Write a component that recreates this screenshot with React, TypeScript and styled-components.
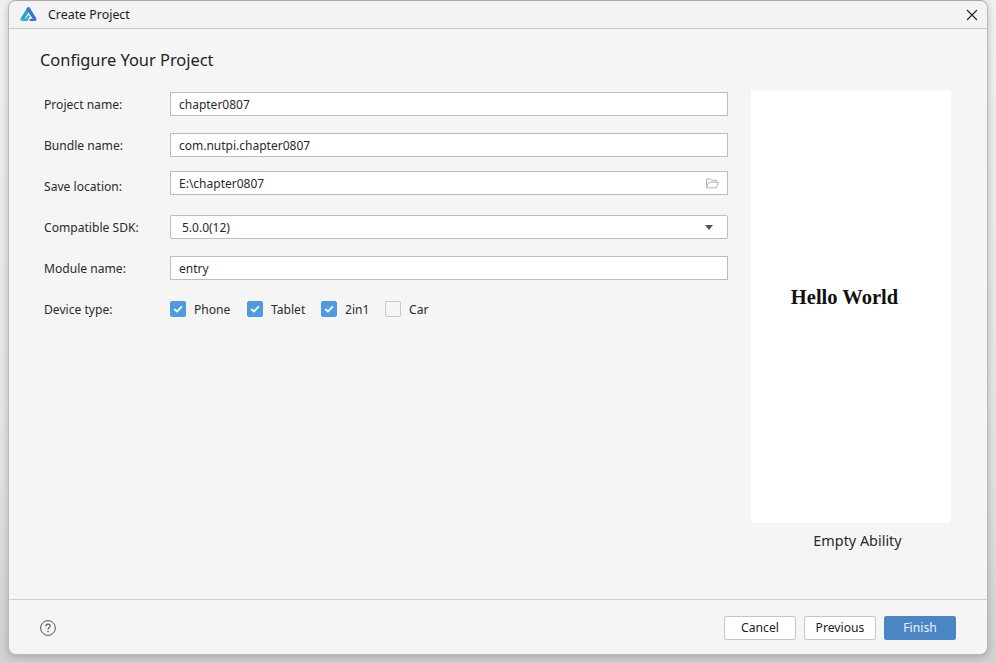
import { createGlobalStyle } from 'styled-components';
import styled from 'styled-components';

const GlobalStyle = createGlobalStyle`
  html, body {
    margin: 0;
    padding: 0;
    height: 100%;
    background: #e9e9e9;
    overflow: hidden;
  }
  #root {
    height: 100%;
  }
  * {
    box-sizing: border-box;
  }
`;

const Desktop = styled.div`
  width: 996px;
  height: 663px;
  padding: 0 8px 8px;
  background: linear-gradient(to bottom, #f2f2f2, #e4e4e4 70%, #d2d2d2);
  font-family: 'Noto Sans', 'Open Sans', sans-serif;
  color: #222;
`;
const Dialog = styled.div`
  width: 980px;
  height: 655px;
  display: flex;
  flex-direction: column;
  background: #f5f5f5;
  border: 1px solid #b9b9b9;
  border-top-color: #aaa;
  border-radius: 8px;
  box-shadow: 0 2px 8px rgba(0, 0, 0, 0.22);
  overflow: hidden;
`;
const TitleBar = styled.div`
  height: 28px;
  flex: none;
  display: flex;
  align-items: center;
  padding: 0 9px 0 11px;
  background: #f3f3f3;
  border-bottom: 1px solid #c9c9c9;
`;
const TitleText = styled.span`
  margin-left: 11px;
  font-size: 12.4px;
  color: #1c1c1c;
`;
const CloseButton = styled.button`
  width: 12px;
  height: 12px;
  margin-left: auto;
  padding: 0;
  border: 0;
  background: none;
  display: flex;
`;
const Body = styled.div`
  flex: 1;
  min-height: 0;
  display: flex;
  padding: 18px 36px 0 31px;
`;
const FormColumn = styled.div`
  width: 688px;
  flex: none;
`;
const Heading = styled.h1`
  margin: 0 0 20px;
  height: 25px;
  font-size: 16.4px;
  line-height: 25px;
  font-weight: 400;
  color: #1e1e1e;
`;
const Row = styled.div<{ $top: number }>`
  display: flex;
  align-items: center;
  height: 24px;
  margin-top: ${(p) => p.$top}px;
  padding-left: 4px;
`;
const Label = styled.label<{ $drop?: number }>`
  width: 126px;
  flex: none;
  padding-top: ${(p) => p.$drop ?? 0}px;
  font-size: 12.1px;
  color: #2a2a2a;
`;
const FieldBox = styled.div`
  flex: 1;
  height: 24px;
  display: flex;
  align-items: center;
  justify-content: space-between;
  padding: 0 8px;
  background: #fff;
  border: 1px solid #bdbdbd;
  font-size: 12px;
  color: #2a2a2a;
`;
const SelectBox = styled(FieldBox)`
  padding: 0 14px 0 11px;
  border-radius: 2px;
`;
const Caret = styled.span`
  width: 0;
  height: 0;
  border-left: 4px solid transparent;
  border-right: 4px solid transparent;
  border-top: 5px solid #555;
`;
const CheckGroup = styled.div`
  display: flex;
  align-items: center;
`;
const CheckItem = styled.div<{ $width: number }>`
  width: ${(p) => p.$width}px;
  display: flex;
  align-items: center;
  font-size: 12.1px;
  color: #2a2a2a;
`;
const CheckBox = styled.span<{ $on: boolean }>`
  width: 16px;
  height: 16px;
  flex: none;
  margin-right: 8px;
  display: flex;
  align-items: center;
  justify-content: center;
  border-radius: 2px;
  background: ${(p) => (p.$on ? '#4d9be0' : '#f5f5f5')};
  border: 1px solid ${(p) => (p.$on ? '#4d9be0' : '#c8c8c8')};
`;
const PreviewColumn = styled.div`
  width: 200px;
  margin-left: 23px;
  padding-top: 43px;
  flex: none;
  display: flex;
  flex-direction: column;
`;
const Preview = styled.div`
  height: 433px;
  background: #fff;
  border-radius: 2px;
  display: flex;
  justify-content: center;
  padding: 194px 13px 0 0;
  font-family: 'Liberation Serif', serif;
  font-weight: 700;
  font-size: 20.5px;
  line-height: 26px;
  color: #111;
`;
const PreviewName = styled.div`
  margin-top: 8px;
  padding-left: 13px;
  text-align: center;
  font-size: 14.4px;
  line-height: 20px;
  color: #2a2a2a;
`;
const Footer = styled.div`
  height: 55px;
  flex: none;
  display: flex;
  align-items: flex-start;
  justify-content: space-between;
  padding: 16px 31px 0 31px;
  border-top: 1px solid #d0d0d0;
`;
const HelpIcon = styled.div`
  width: 16px;
  height: 16px;
  margin-top: 4px;
  display: flex;
`;
const Buttons = styled.div`
  display: flex;
  gap: 8px;
`;
const Button = styled.button<{ $primary?: boolean }>`
  width: 72px;
  height: 24px;
  padding: 0 0 2px;
  font-family: inherit;
  font-size: 12.2px;
  border-radius: 2px;
  border: 1px solid ${(p) => (p.$primary ? '#4a86c5' : '#c6c6c6')};
  background: ${(p) => (p.$primary ? '#4a86c5' : '#fff')};
  color: ${(p) => (p.$primary ? '#eef4fb' : '#222')};
`;

const Logo = () => (
  <svg width="17" height="15" viewBox="0 0 17 15">
    <path d="M8.5 2 L2.2 12.2" stroke="#2f9fd2" strokeWidth="3.4" strokeLinecap="round" fill="none" />
    <path d="M8.5 2 L14.8 12.2" stroke="#3b74d6" strokeWidth="3.4" strokeLinecap="round" fill="none" />
    <path d="M2.2 12.6 L6.6 12.6 L8.5 9.6" stroke="#35b4c6" strokeWidth="2.6" strokeLinecap="round" fill="none" />
    <path d="M10.4 12.8 L14.8 12.8" stroke="#3b74d6" strokeWidth="2.2" strokeLinecap="round" fill="none" />
  </svg>
);

const CloseIcon = () => (
  <svg width="12" height="12" viewBox="0 0 12 12">
    <path d="M1 1 L11 11 M11 1 L1 11" stroke="#222" strokeWidth="1.1" fill="none" />
  </svg>
);

const FolderIcon = () => (
  <svg width="13" height="11" viewBox="0 0 13 11">
    <path
      d="M0.5 9.8 V1 H4.5 L5.5 2.3 H10.5 V4 M0.5 9.8 H10.4 L12.4 4.2 H2.6 L0.5 9.8"
      stroke="#b5b5b5"
      fill="none"
    />
  </svg>
);

const CheckMark = () => (
  <svg width="10" height="8" viewBox="0 0 10 8">
    <path d="M1.2 4 L4 6.6 L8.8 1.4" stroke="#fff" strokeWidth="1.8" fill="none" />
  </svg>
);

const QuestionIcon = () => (
  <svg width="16" height="16" viewBox="0 0 16 16">
    <circle cx="8" cy="8" r="7.4" stroke="#555" fill="none" />
    <path
      d="M5.8 6.2 C5.8 4.8 6.8 4.1 8 4.1 C9.3 4.1 10.2 4.9 10.2 6 C10.2 7.4 8 7.5 8 9.4"
      stroke="#555"
      strokeWidth="1.2"
      fill="none"
    />
    <circle cx="8" cy="11.6" r="0.8" fill="#555" />
  </svg>
);

const devices = [
  { name: 'Phone', on: true, width: 77 },
  { name: 'Tablet', on: true, width: 74 },
  { name: '2in1', on: true, width: 64 },
  { name: 'Car', on: false, width: 50 },
];

const App = () => {
  return (
    <Desktop>
      <GlobalStyle />
      <Dialog>
        <TitleBar>
          <Logo />
          <TitleText>Create Project</TitleText>
          <CloseButton>
            <CloseIcon />
          </CloseButton>
        </TitleBar>
        <Body>
          <FormColumn>
            <Heading>Configure Your Project</Heading>
            <Row $top={0}>
              <Label>Project name:</Label>
              <FieldBox>chapter0807</FieldBox>
            </Row>
            <Row $top={17}>
              <Label>Bundle name:</Label>
              <FieldBox>com.nutpi.chapter0807</FieldBox>
            </Row>
            <Row $top={14}>
              <Label $drop={6}>Save location:</Label>
              <FieldBox>
                E:\chapter0807
                <FolderIcon />
              </FieldBox>
            </Row>
            <Row $top={20}>
              <Label>Compatible SDK:</Label>
              <SelectBox>
                5.0.0(12)
                <Caret />
              </SelectBox>
            </Row>
            <Row $top={17}>
              <Label>Module name:</Label>
              <FieldBox>entry</FieldBox>
            </Row>
            <Row $top={17}>
              <Label>Device type:</Label>
              <CheckGroup>
                {devices.map((d) => (
                  <CheckItem key={d.name} $width={d.width}>
                    <CheckBox $on={d.on}>{d.on && <CheckMark />}</CheckBox>
                    {d.name}
                  </CheckItem>
                ))}
              </CheckGroup>
            </Row>
          </FormColumn>
          <PreviewColumn>
            <Preview>Hello World</Preview>
            <PreviewName>Empty Ability</PreviewName>
          </PreviewColumn>
        </Body>
        <Footer>
          <HelpIcon>
            <QuestionIcon />
          </HelpIcon>
          <Buttons>
            <Button>Cancel</Button>
            <Button>Previous</Button>
            <Button $primary>Finish</Button>
          </Buttons>
        </Footer>
      </Dialog>
    </Desktop>
  );
};

export default App;
